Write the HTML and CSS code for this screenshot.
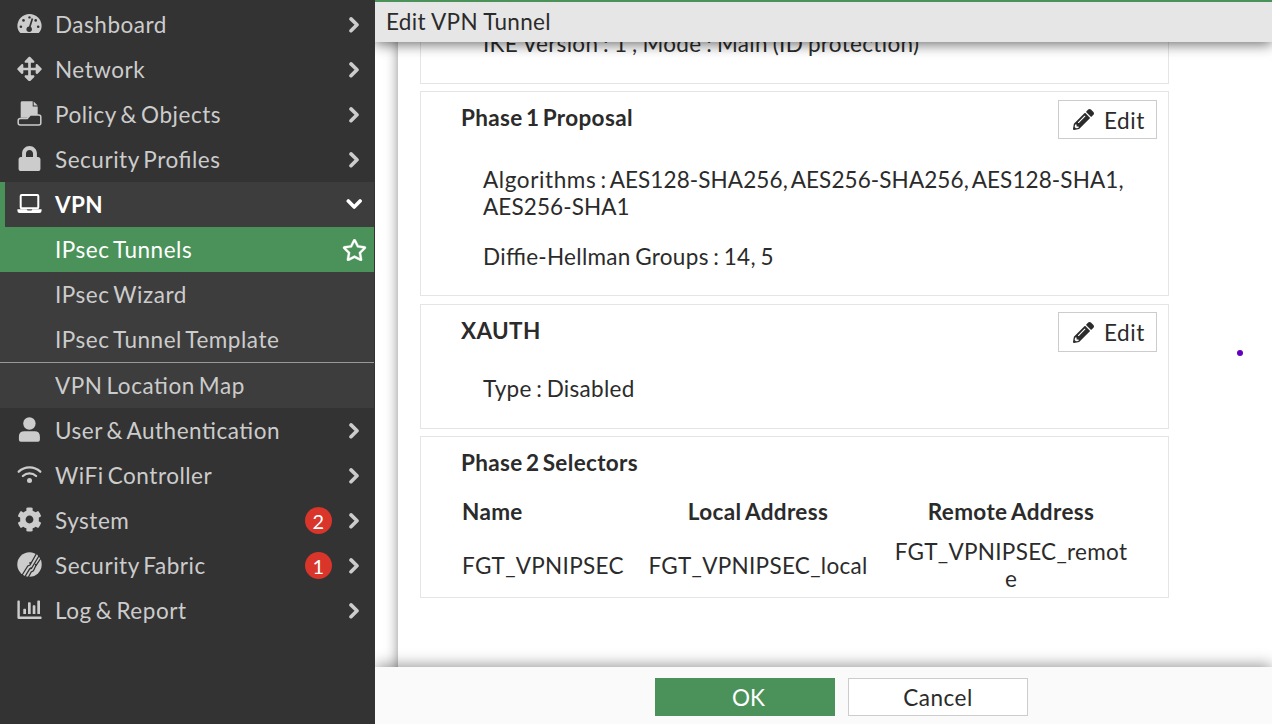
FILE: index.html
```html
<!DOCTYPE html>
<html lang="en">
<head>
    <meta charset="UTF-8">
    <meta name="viewport" content="width=device-width, initial-scale=1.0">
    <title>Edit VPN Tunnel</title>
    <link rel="stylesheet" href="styles.css">
</head>
<body>
    <svg class="defs" width="0" height="0">
        <symbol id="arrow" viewBox="0 0 16 16">
            <path d="M4 1.900L10 7.800l-6 5.900" fill="none" stroke="currentColor" stroke-width="3.600" stroke-linecap="round" stroke-linejoin="round"/>
        </symbol>
        <symbol id="pencil" viewBox="0 0 512 512">
            <path fill="currentColor" d="M497.9 142.1l-46.1 46.1c-4.7 4.7-12.3 4.7-17 0l-111-111c-4.7-4.7-4.7-12.3 0-17l46.1-46.1c18.7-18.7 49.1-18.7 67.9 0l60.1 60.1c18.8 18.7 18.8 49.1 0 67.9zM284.2 99.8L21.6 362.4.4 483.9c-2.9 16.4 11.4 30.6 27.8 27.8l121.5-21.3 262.6-262.6c4.7-4.7 4.7-12.3 0-17l-111-111c-4.8-4.7-12.4-4.7-17.1 0zM124.1 339.9c-5.5-5.5-5.5-14.3 0-19.8l154-154c5.5-5.5 14.3-5.5 19.8 0s5.5 14.3 0 19.8l-154 154c-5.5 5.5-14.3 5.5-19.8 0zM88 424h48v36.3l-64.5 11.3-31.1-31.1L51.7 376H88v48z"/>
        </symbol>
    </svg>

    <div class="sidebar">
        <div class="item">
            <svg class="icon" viewBox="0 0 25 25"><path fill="currentColor" d="M3.300 22C1.400 20.200 .4 17.800 .4 15.100a12.100 12.100 0 0 1 24.200 0c0 2.700-1 5.100-2.900 6.900z"/><g fill="#333"><circle cx="3.900" cy="15.800" r="1.300"/><circle cx="6.500" cy="9.400" r="1.300"/><circle cx="12.500" cy="6.400" r="1.200"/><circle cx="18.700" cy="9.400" r="1.300"/><circle cx="21.200" cy="15.800" r="1.300"/><circle cx="12.200" cy="18.200" r="2.700"/></g><path d="M12.300 17.500L15.400 7.600" stroke="#333" stroke-width="1.700"/></svg>
            <span>Dashboard</span>
            <svg class="arrow"><use href="#arrow"/></svg>
        </div>
        <div class="item">
            <svg class="icon" viewBox="-5 -16 522 522"><path fill="currentColor" d="M352.201 425.775l-79.196 79.196c-9.373 9.373-24.568 9.373-33.941 0l-79.196-79.196c-15.119-15.119-4.411-40.971 16.971-40.97h51.162L228 284H127.196v51.162c0 21.382-25.851 32.09-40.971 16.971L7.029 272.937c-9.373-9.373-9.373-24.569 0-33.941L86.225 159.8c15.119-15.119 40.971-4.411 40.971 16.971V228H228V127.196h-51.23c-21.382 0-32.09-25.851-16.971-40.971l79.196-79.196c9.373-9.373 24.568-9.373 33.941 0l79.196 79.196c15.119 15.119 4.411 40.971-16.971 40.971h-51.162V228h100.804v-51.162c0-21.382 25.851-32.09 40.97-16.971l79.196 79.196c9.373 9.373 9.373 24.569 0 33.941L425.773 352.2c-15.119 15.119-40.971 4.411-40.97-16.971V284H284v100.804h51.23c21.382 0 32.09 25.851 16.971 40.971z"/></svg>
            <span>Network</span>
            <svg class="arrow"><use href="#arrow"/></svg>
        </div>
        <div class="item">
            <svg class="icon" viewBox="0 0 25 25"><path fill="currentColor" d="M4.500 .3h11.200v5.200h5V14h-7.400l-2.300 2.800H3.700V1.200z"/><path fill="currentColor" d="M16.700 .6l4 3.900h-4z"/><path d="M3.400 17.400h6.900l3-3.300h8.500q2 0 2 2v5.800q0 2-2 2H3.200q-2 0-2-2v-2.500q0-2 2.200-2z" fill="#333" stroke="currentColor" stroke-width="1.500"/></svg>
            <span>Policy &amp; Objects</span>
            <svg class="arrow"><use href="#arrow"/></svg>
        </div>
        <div class="item">
            <svg class="icon" viewBox="-32 0 512 512"><path fill="currentColor" d="M400 224h-24v-72C376 68.2 307.8 0 224 0S72 68.2 72 152v72H48c-26.5 0-48 21.5-48 48v192c0 26.5 21.5 48 48 48h352c26.5 0 48-21.5 48-48V272c0-26.500-21.500-48-48-48zm-104 0H152v-72c0-39.700 32.300-72 72-72s72 32.300 72 72v72z"/></svg>
            <span>Security Profiles</span>
            <svg class="arrow"><use href="#arrow"/></svg>
        </div>
        <div class="item open">
            <svg class="icon" viewBox="0 0 25 25"><rect x="3.700" y="3.900" width="17.600" height="13.300" rx="1" fill="none" stroke="currentColor" stroke-width="2"/><path fill="currentColor" d="M.4 18.200h9.300q.3 1.200 1.300 1.200h3q1 0 1.300-1.200h9.300v1.500q0 2.300-2.300 2.300H2.700Q.4 22 .4 19.700z"/></svg>
            <span>VPN</span>
            <svg class="arrow down"><use href="#arrow"/></svg>
        </div>
        <div class="submenu">
            <div class="sub selected">
                <span>IPsec Tunnels</span>
                <svg class="star" viewBox="0 0 576 512"><path fill="currentColor" stroke="currentColor" stroke-width="8" d="M528.1 171.5L382 150.2 316.7 17.8c-11.7-23.6-45.6-23.9-57.4 0L194 150.2 47.9 171.5c-26.2 3.8-36.7 36.1-17.7 54.6l105.7 103-25 145.5c-4.5 26.3 23.2 46 46.4 33.7L288 439.6l130.7 68.7c23.2 12.2 50.9-7.4 46.4-33.7l-25-145.5 105.7-103c19-18.5 8.5-50.8-17.7-54.6zM388.6 312.3l23.7 138.4L288 385.4l-124.3 65.3 23.7-138.4-100.6-98 139-20.2 62.2-126 62.2 126 139 20.2-100.6 98z"/></svg>
            </div>
            <div class="sub"><span>IPsec Wizard</span></div>
            <div class="sub"><span>IPsec Tunnel Template</span></div>
            <div class="sub line"><span>VPN Location Map</span></div>
        </div>
        <div class="item">
            <svg class="icon" viewBox="0 0 25 25"><circle cx="12.400" cy="6.500" r="6.200" fill="currentColor"/><path fill="currentColor" d="M7.500 14.200h10q5.400 0 5.400 5.400v3.200q0 2-2 2h-17q-2 0-2-2v-3.200q0-5.400 5.600-5.400z"/></svg>
            <span>User &amp; Authentication</span>
            <svg class="arrow"><use href="#arrow"/></svg>
        </div>
        <div class="item">
            <svg class="icon" viewBox="0 0 25 25"><g fill="none" stroke="currentColor" stroke-width="2.300" stroke-linecap="round"><path d="M1.700 9.700a15.800 15.800 0 0 1 21.600 0"/><path d="M5.900 14a9.700 9.700 0 0 1 13.200 0"/></g><circle cx="12.500" cy="18.500" r="2.500" fill="currentColor"/></svg>
            <span>WiFi Controller</span>
            <svg class="arrow"><use href="#arrow"/></svg>
        </div>
        <div class="item">
            <svg class="icon" viewBox="0 0 512 512"><path fill="currentColor" d="M487.4 315.7l-42.6-24.6c4.3-23.2 4.3-47 0-70.2l42.6-24.6c4.9-2.8 7.1-8.6 5.5-14-11.1-35.6-30-67.8-54.7-94.6-3.8-4.1-10-5.1-14.8-2.3L380.8 110c-17.9-15.4-38.5-27.3-60.8-35.1V25.8c0-5.6-3.9-10.5-9.4-11.7-36.7-8.2-74.3-7.8-109.2 0-5.5 1.2-9.4 6.1-9.4 11.7V75c-22.2 7.9-42.8 19.8-60.8 35.1L88.7 85.5c-4.9-2.8-11-1.9-14.8 2.3-24.7 26.7-43.6 58.9-54.7 94.6-1.7 5.4.6 11.2 5.5 14L67.3 221c-4.3 23.2-4.3 47 0 70.2l-42.6 24.6c-4.9 2.8-7.1 8.6-5.5 14 11.1 35.6 30 67.8 54.7 94.6 3.8 4.1 10 5.1 14.8 2.3l42.6-24.6c17.9 15.4 38.5 27.3 60.8 35.1v49.2c0 5.6 3.9 10.5 9.4 11.7 36.7 8.2 74.3 7.8 109.2 0 5.5-1.2 9.4-6.1 9.4-11.7v-49.2c22.2-7.9 42.8-19.8 60.8-35.1l42.6 24.6c4.9 2.8 11 1.9 14.8-2.3 24.7-26.7 43.6-58.9 54.7-94.6 1.5-5.5-.7-11.3-5.6-14.1zM256 336c-44.1 0-80-35.9-80-80s35.9-80 80-80 80 35.9 80 80-35.9 80-80 80z"/></svg>
            <span>System</span>
            <b class="badge">2</b>
            <svg class="arrow"><use href="#arrow"/></svg>
        </div>
        <div class="item">
            <svg class="icon" viewBox="0 0 25 25"><circle cx="12.500" cy="12.500" r="12.200" fill="currentColor"/><g fill="none" stroke="#333" stroke-width="1.300"><path d="M4.500 24l6.300-10 2.200-1L19.500 1.500"/><path d="M7.700 25l5-8.200 2-.8L22.500 3"/><path d="M11.500 25l2.700-5 2.200-1.200 2.400-5L24 6"/></g><g fill="#333"><circle cx="13.200" cy="11" r="1"/><circle cx="14" cy="16.300" r="1"/><circle cx="18.800" cy="12.700" r="1"/></g></svg>
            <span>Security Fabric</span>
            <b class="badge">1</b>
            <svg class="arrow"><use href="#arrow"/></svg>
        </div>
        <div class="item">
            <svg class="icon" viewBox="0 0 25 25"><path fill="currentColor" d="M.4 4.200q0-.8.800-.8h.8q.8 0 .8.800v15.400h21q.8 0 .8.800v.8q0 .8-.8.800H2Q.4 22 .4 20.400zM6.300 12.500q0-.7.700-.7h1.300q.7 0 .7.700v4.500H6.300zM11 5.900q0-.7.700-.7H13q.7 0 .7.700V17H11zM15.700 9q0-.7.700-.7h1.300q.7 0 .7.700v8h-2.700zM20.300 4.200q0-.7.700-.7h1.300q.7 0 .7.700V17h-2.700z"/></svg>
            <span>Log &amp; Report</span>
            <svg class="arrow"><use href="#arrow"/></svg>
        </div>
    </div>

    <div class="main">
        <div class="header">Edit VPN Tunnel</div>
        <div class="content">
            <div class="page">
                <div class="card auth">
                    <p>IKE Version : 1 , Mode : Main (ID protection)</p>
                </div>
                <div class="card phase1">
                    <div class="title">
                        <h3>Phase 1 Proposal</h3>
                        <button class="edit"><svg class="pencil"><use href="#pencil"/></svg>Edit</button>
                    </div>
                    <p class="algo"><span class="label">Algorithms :</span> AES128-SHA256, AES256-SHA256, AES128-SHA1, AES256-SHA1</p>
                    <p>Diffie-Hellman Groups : 14, 5</p>
                </div>
                <div class="card xauth">
                    <div class="title">
                        <h3>XAUTH</h3>
                        <button class="edit"><svg class="pencil"><use href="#pencil"/></svg>Edit</button>
                    </div>
                    <p>Type : Disabled</p>
                </div>
                <div class="card phase2">
                    <h3>Phase 2 Selectors</h3>
                    <div class="table">
                        <b class="name">Name</b>
                        <b>Local Address</b>
                        <b>Remote Address</b>
                        <span class="name">FGT_VPNIPSEC</span>
                        <span>FGT_VPNIPSEC_local</span>
                        <span>FGT_VPNIPSEC_remote</span>
                    </div>
                </div>
            </div>
            <i class="dot"></i>
        </div>
        <div class="footer">
            <button class="ok">OK</button>
            <button>Cancel</button>
        </div>
    </div>
</body>
</html>
```
FILE: styles.css
```css
*{
    box-sizing: border-box;
}
body{
    margin: 0;
    display: flex;
    width: 1272px;
    height: 724px;
    overflow: hidden;
    font-family: Lato, sans-serif;
    font-size: 22.5px;
    line-height: 27px;
    font-feature-settings: "liga" 1;
    letter-spacing: 0.3px;
    color: #2b2b2b;
    background-color: white;
}
h3, p{
    margin: 0;
    font-size: inherit;
}
h3{
    letter-spacing: 0.35px;
    word-spacing: -2.5px;
}
b{
    letter-spacing: 0.35px;
    word-spacing: -1.5px;
}
p{
    word-spacing: -1.5px;
}
.defs{
    position: absolute;
}
.sidebar{
    width: 375px;
    height: 724px;
    padding-top: 2px;
    background-color: #333;
    color: #ccc;
    letter-spacing: 0.53px;
    word-spacing: -2.2px;
    flex-shrink: 0;
    z-index: 2;
}
.item{
    display: flex;
    align-items: center;
    height: 45px;
    padding: 0 12px 0 17px;
}
.item span{
    margin-right: auto;
}
.icon{
    width: 25px;
    height: 25px;
    margin: 0 13px 2px 0;
}
.arrow{
    width: 16px;
    height: 16px;
}
.down{
    transform: rotate(90deg);
}
.open{
    width: 374px;
    padding: 0 12px 0 12px;
    border-left: 5px solid #4a9259;
    background-color: #3d3d3d;
    color: white;
    font-weight: bold;
    letter-spacing: 0.4px;
}
.submenu{
    width: 374px;
    background-color: #3d3d3d;
}
.sub{
    display: flex;
    align-items: center;
    justify-content: space-between;
    height: 45px;
    padding: 0 7px 0 55px;
}
.selected{
    background-color: #4a9259;
    color: white;
}
.star{
    width: 25px;
    height: 22px;
}
.line{
    height: 46px;
    border-top: 1px solid #999;
}
.badge{
    width: 27px;
    height: 27px;
    margin: 0 15px 1px 0;
    border-radius: 50%;
    background-color: #d9352a;
    color: white;
    font-size: 20px;
    font-weight: normal;
    line-height: 28px;
    text-align: center;
}
.main{
    display: flex;
    flex-direction: column;
    width: 897px;
}
.header{
    height: 42px;
    padding: 6px 11px;
    border-top: 2px solid #4a9259;
    background-color: #e6e6e6;
    box-shadow: 0 2px 14px rgba(0, 0, 0, 0.6);
    z-index: 1;
}
.content{
    position: relative;
    height: 625px;
    padding-left: 23px;
    overflow: hidden;
}
.page{
    height: 700px;
    padding-left: 22px;
    margin-top: -20px;
    box-shadow: 0 0 12px rgba(0, 0, 0, 0.45);
}
.card{
    width: 749px;
    border: 1px solid #e5e5e5;
    margin-bottom: 7px;
    padding-left: 40px;
}
.card p{
    padding-left: 22px;
}
.title{
    display: flex;
    justify-content: space-between;
    padding-right: 11px;
}
.edit{
    display: flex;
    align-items: center;
    width: 99px;
    height: 39px;
    padding: 2px 0 0 14px;
    letter-spacing: 0.6px;
}
.pencil{
    width: 21px;
    height: 21px;
    margin: 0 10px 2px 0;
}
.auth{
    height: 62px;
    padding-top: 7px;
}
.auth p{
    word-spacing: -1.2px;
}
.phase1{
    height: 205px;
    padding-top: 8px;
    margin-bottom: 8px;
}
.phase1 h3{
    margin-top: 4px;
}
.algo{
    width: 680px;
    margin: 27px 0 23px;
    letter-spacing: 0.1px;
    word-spacing: -2.3px;
}
.label{
    letter-spacing: 0.6px;
    word-spacing: -2px;
}
.xauth{
    height: 125px;
    padding-top: 7px;
}
.xauth .edit{
    height: 40px;
    padding-top: 0;
}
.xauth .pencil{
    margin-bottom: 0;
}
.xauth h3{
    margin-top: 5px;
}
.xauth p{
    margin-top: 23px;
}
.phase2{
    height: 162px;
    padding-top: 12px;
}
.table{
    display: grid;
    grid-template-columns: 174px 246px 260px;
    grid-template-rows: 27px 54px;
    row-gap: 13px;
    margin-top: 22px;
    align-items: center;
    text-align: center;
}
.table span{
    padding: 0 12px;
    word-break: break-all;
}
.table .name{
    padding: 0 0 0 1px;
    text-align: left;
}
.dot{
    position: absolute;
    left: 861.5px;
    top: 308px;
    width: 6px;
    height: 6px;
    border-radius: 50%;
    background-color: #6200c0;
}
.footer{
    display: flex;
    justify-content: center;
    gap: 13px;
    height: 57px;
    padding: 11px 0 0 36px;
    background-color: #fafafa;
    box-shadow: 0 -2px 14px rgba(0, 0, 0, 0.4);
    z-index: 1;
}
button{
    border: 1px solid #ccc;
    background-color: white;
    color: inherit;
    font: inherit;
    letter-spacing: 0.5px;
}
.footer button{
    width: 180px;
    height: 38px;
    padding: 1px 0 0;
}
.footer .ok{
    padding-left: 7px;
    border: none;
    background-color: #4a9259;
    color: white;
    letter-spacing: 0;
}
```
